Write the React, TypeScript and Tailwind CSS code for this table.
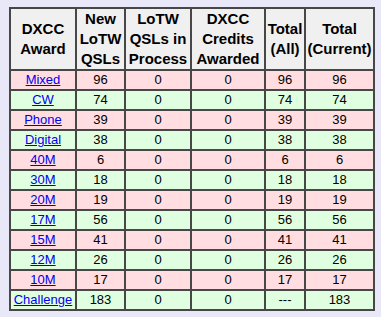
const rows = [
  { award: "Mixed", fresh: "96", proc: "0", cred: "0", all: "96", cur: "96" },
  { award: "CW", fresh: "74", proc: "0", cred: "0", all: "74", cur: "74" },
  { award: "Phone", fresh: "39", proc: "0", cred: "0", all: "39", cur: "39" },
  { award: "Digital", fresh: "38", proc: "0", cred: "0", all: "38", cur: "38" },
  { award: "40M", fresh: "6", proc: "0", cred: "0", all: "6", cur: "6" },
  { award: "30M", fresh: "18", proc: "0", cred: "0", all: "18", cur: "18" },
  { award: "20M", fresh: "19", proc: "0", cred: "0", all: "19", cur: "19" },
  { award: "17M", fresh: "56", proc: "0", cred: "0", all: "56", cur: "56" },
  { award: "15M", fresh: "41", proc: "0", cred: "0", all: "41", cur: "41" },
  { award: "12M", fresh: "26", proc: "0", cred: "0", all: "26", cur: "26" },
  { award: "10M", fresh: "17", proc: "0", cred: "0", all: "17", cur: "17" },
  { award: "Challenge", fresh: "183", proc: "0", cred: "0", all: "---", cur: "183" },
];

const headers = [
  ["DXCC", "Award"],
  ["New", "LoTW", "QSLs"],
  ["LoTW", "QSLs in", "Process"],
  ["DXCC", "Credits", "Awarded"],
  ["Total", "(All)"],
  ["Total", "(Current)"],
];

export default function App() {
  return (
    <div className="w-[381px] h-[317px] overflow-hidden bg-[#e8e8f8] pt-[7px] pl-[9px] font-['Liberation_Sans',Arial,sans-serif]">
      <div className="grid w-[366px] grid-cols-[64px_47px_64px_72px_38px_67px] gap-[2px] bg-[#474747] p-[2px]">
        {headers.map((lines, i) => (
          <div key={i} className="flex h-[60px] flex-col items-center justify-center bg-[#f0f0f0] text-[15px] font-bold leading-[20px] text-black whitespace-nowrap">
            {lines.map((l) => (
              <span key={l}>{l}</span>
            ))}
          </div>
        ))}
        {rows.map((r, i) => {
          const bg = i % 2 === 0 ? "bg-[#ffdde0]" : "bg-[#e0ffe0]";
          const cell = `flex h-[18px] items-center justify-center text-[13px] text-black ${bg}`;
          return [
            <div key={r.award + "a"} className={cell}>
              <a href="#" className="text-[#0000ee] underline">{r.award}</a>
            </div>,
            <div key={r.award + "b"} className={cell}>{r.fresh}</div>,
            <div key={r.award + "c"} className={cell}>{r.proc}</div>,
            <div key={r.award + "d"} className={cell}>{r.cred}</div>,
            <div key={r.award + "e"} className={cell}>{r.all}</div>,
            <div key={r.award + "f"} className={cell}>{r.cur}</div>,
          ];
        })}
      </div>
      <p className="mt-[2px] w-[366px] pl-[130px] text-[13px] text-black">* Awarded based on current and deleted</p>
    </div>
  );
}
